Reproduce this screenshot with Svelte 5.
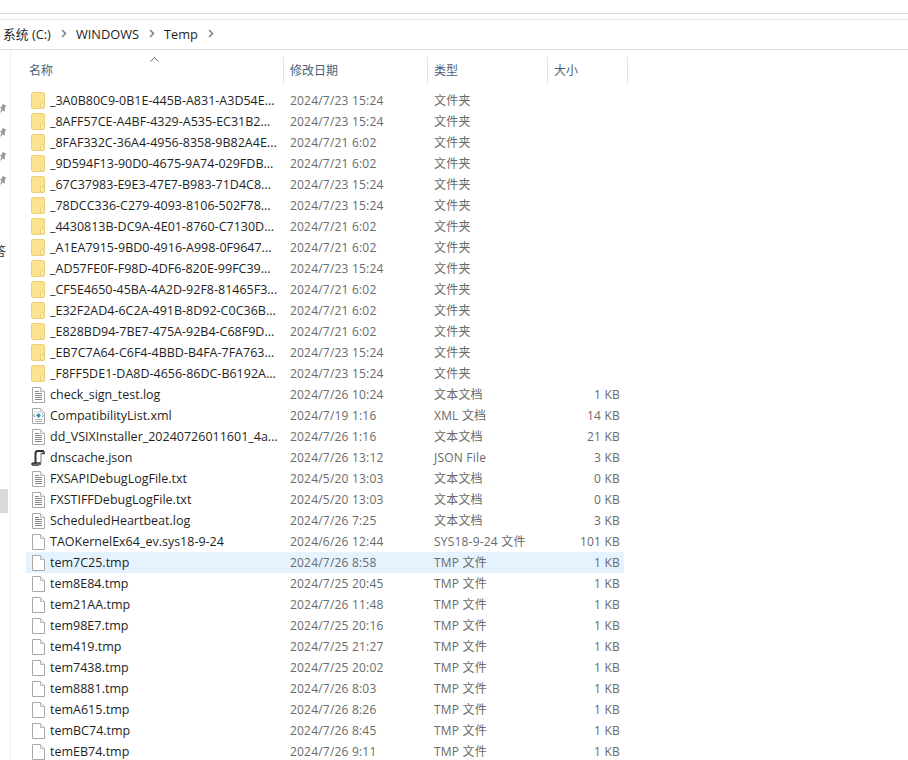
<script>
	const folders = [
		['_3A0B80C9-0B1E-445B-A831-A3D54E...', '2024/7/23 15:24'],
		['_8AFF57CE-A4BF-4329-A535-EC31B2...', '2024/7/23 15:24'],
		['_8FAF332C-36A4-4956-8358-9B82A4E...', '2024/7/21 6:02'],
		['_9D594F13-90D0-4675-9A74-029FDB...', '2024/7/21 6:02'],
		['_67C37983-E9E3-47E7-B983-71D4C8...', '2024/7/23 15:24'],
		['_78DCC336-C279-4093-8106-502F78...', '2024/7/23 15:24'],
		['_4430813B-DC9A-4E01-8760-C7130D...', '2024/7/21 6:02'],
		['_A1EA7915-9BD0-4916-A998-0F9647...', '2024/7/21 6:02'],
		['_AD57FE0F-F98D-4DF6-820E-99FC39...', '2024/7/23 15:24'],
		['_CF5E4650-45BA-4A2D-92F8-81465F3...', '2024/7/21 6:02'],
		['_E32F2AD4-6C2A-491B-8D92-C0C36B...', '2024/7/21 6:02'],
		['_E828BD94-7BE7-475A-92B4-C68F9D...', '2024/7/21 6:02'],
		['_EB7C7A64-C6F4-4BBD-B4FA-7FA763...', '2024/7/23 15:24'],
		['_F8FF5DE1-DA8D-4656-86DC-B6192A...', '2024/7/23 15:24']
	];

	const rows = [
		...folders.map(([name, date]) => ({ icon: 'folder', name, date, type: '文件夹', size: '' })),
		{ icon: 'text', name: 'check_sign_test.log', date: '2024/7/26 10:24', type: '文本文档', size: '1 KB' },
		{ icon: 'xml', name: 'CompatibilityList.xml', date: '2024/7/19 1:16', type: 'XML 文档', size: '14 KB' },
		{ icon: 'text', name: 'dd_VSIXInstaller_20240726011601_4a...', date: '2024/7/26 1:16', type: '文本文档', size: '21 KB' },
		{ icon: 'json', name: 'dnscache.json', date: '2024/7/26 13:12', type: 'JSON File', size: '3 KB' },
		{ icon: 'text', name: 'FXSAPIDebugLogFile.txt', date: '2024/5/20 13:03', type: '文本文档', size: '0 KB' },
		{ icon: 'text', name: 'FXSTIFFDebugLogFile.txt', date: '2024/5/20 13:03', type: '文本文档', size: '0 KB' },
		{ icon: 'text', name: 'ScheduledHeartbeat.log', date: '2024/7/26 7:25', type: '文本文档', size: '3 KB' },
		{ icon: 'blank', name: 'TAOKernelEx64_ev.sys18-9-24', date: '2024/6/26 12:44', type: 'SYS18-9-24 文件', size: '101 KB' },
		{ icon: 'blank', name: 'tem7C25.tmp', date: '2024/7/26 8:58', type: 'TMP 文件', size: '1 KB', hover: true },
		{ icon: 'blank', name: 'tem8E84.tmp', date: '2024/7/25 20:45', type: 'TMP 文件', size: '1 KB' },
		{ icon: 'blank', name: 'tem21AA.tmp', date: '2024/7/26 11:48', type: 'TMP 文件', size: '1 KB' },
		{ icon: 'blank', name: 'tem98E7.tmp', date: '2024/7/25 20:16', type: 'TMP 文件', size: '1 KB' },
		{ icon: 'blank', name: 'tem419.tmp', date: '2024/7/25 21:27', type: 'TMP 文件', size: '1 KB' },
		{ icon: 'blank', name: 'tem7438.tmp', date: '2024/7/25 20:02', type: 'TMP 文件', size: '1 KB' },
		{ icon: 'blank', name: 'tem8881.tmp', date: '2024/7/26 8:03', type: 'TMP 文件', size: '1 KB' },
		{ icon: 'blank', name: 'temA615.tmp', date: '2024/7/26 8:26', type: 'TMP 文件', size: '1 KB' },
		{ icon: 'blank', name: 'temBC74.tmp', date: '2024/7/26 8:45', type: 'TMP 文件', size: '1 KB' },
		{ icon: 'blank', name: 'temEB74.tmp', date: '2024/7/26 9:11', type: 'TMP 文件', size: '1 KB' }
	];
</script>

{#snippet chevron()}
	<svg class="chev" width="6" height="9" viewBox="0 0 6 9"><path d="M1 1l3.500 3.500L1 8" fill="none" stroke="#808080" stroke-width="1.500" /></svg>
{/snippet}

{#snippet pin()}
	<svg class="pin" width="6" height="9" viewBox="0 0 6 9"><path d="M6 1.500L3 0 1 3 0 3.500l1.500 1.500L0 9l3-2.500L4.500 8 5 4z" fill="#9a9a9a" /></svg>
{/snippet}

{#snippet fileIcon(kind)}
	{#if kind === 'folder'}
		<svg width="14" height="17" viewBox="0 0 14 17">
			<rect x=".5" y=".5" width="13" height="16" rx="1.500" fill="#fde28f" stroke="#ecd07a" />
			<path d="M9.500 16v-4.500l3.500-2V15c0 .6-.4 1-1 1z" fill="#fcedb8" stroke="#ecd07a" />
		</svg>
	{:else if kind === 'json'}
		<svg width="14" height="16" viewBox="0 0 14 16">
			<path d="M4.500 14V3.500C4.500 2 5.300 1 6.800 1H13" fill="none" stroke="#333" stroke-width="2" />
			<path d="M13 1.500v2h-2.500M.8 14.800c0-1.200.8-1.800 1.700-1.800h6.500v2" fill="none" stroke="#333" stroke-width="1.600" />
			<path d="M1 15h7" stroke="#333" stroke-width="1.500" />
			<path d="M10 2.500V13" stroke="#777" />
		</svg>
	{:else}
		<svg width="13" height="16" viewBox="0 0 13 16">
			<path d="M.5.500h8l4 4v11H.5z" fill="#fff" stroke="#a8a8a8" />
			<path d="M8.500.500v4h4" fill="#f2f2f2" stroke="#b8b8b8" />
			{#if kind === 'text'}
				<path d="M3 4.500h4M3 6.500h7M3 8.500h7M3 10.500h7M3 12.500h7" stroke="#858585" />
			{:else if kind === 'xml'}
				<rect x="1.500" y="3" width="10" height="1.500" fill="#dfe8ef" />
				<path d="M3 11.500h7M3 13.500h7" stroke="#b0b0b0" />
				<path d="M6.500 5l2.500 2.500L6.500 10 4 7.500z" fill="#2f9aa8" />
				<path d="M3 6l-1.500 1.500L3 9M10 6l1.500 1.500L10 9" fill="none" stroke="#5a8fc5" />
			{/if}
		</svg>
	{/if}
{/snippet}

<div class="window">
	<div class="ribbon-gap"></div>
	<div class="crumbs">
		<span>系统 (C:)</span>{@render chevron()}
		<span>WINDOWS</span>{@render chevron()}
		<span>Temp</span>{@render chevron()}
	</div>
	<div class="body">
		<aside class="nav">
			<div class="pins">
				{@render pin()}
				{@render pin()}
				{@render pin()}
				{@render pin()}
			</div>
			<div class="cut-label">答</div>
			<div class="nav-selected"></div>
		</aside>
		<main class="list">
			<div class="head">
				<div class="col name-col">
					名称
					<svg class="sort" width="9" height="5" viewBox="0 0 9 5"><path d="M.5 4.500l4-4 4 4" fill="none" stroke="#6e6e6e" /></svg>
				</div>
				<div class="col">修改日期</div>
				<div class="col">类型</div>
				<div class="col">大小</div>
			</div>
			{#each rows as row}
				<div class="row" class:hover={row.hover}>
					<div class="cell-name">
						<span class="icon">{@render fileIcon(row.icon)}</span>
						<span class="fname">{row.name}</span>
					</div>
					<div class="meta">{row.date}</div>
					<div class="meta">{row.type}</div>
					<div class="meta size">{row.size}</div>
				</div>
			{/each}
		</main>
	</div>
</div>

<style>
	:global(body) {
		background: #fff;
		overflow: hidden;
	}
	.window {
		height: 760px;
		overflow: hidden;
		font-family: "Open Sans", "Noto Sans CJK SC", sans-serif;
		font-size: 12px;
		color: #1f1f1f;
		background: #fff;
	}
	.ribbon-gap {
		height: 5px;
		margin-top: 13px;
		border-top: 1px solid #dcdcdc;
		border-bottom: 1px solid #e3e3e3;
	}
	.crumbs {
		display: flex;
		align-items: center;
		height: 27px;
		padding: 0 0 2px 3px;
		border-bottom: 1px solid #dfdfdf;
		font-size: 12.8px;
	}
	.chev {
		margin: 0 9px 0 10px;
	}
	.body {
		display: flex;
		height: 710px;
	}
	.nav {
		width: 10px;
		flex: none;
		border-right: 1px solid #f0f0f0;
		overflow: hidden;
	}
	.pins {
		display: flex;
		flex-direction: column;
		gap: 15px;
		padding-top: 54px;
	}
	.pin {
		display: block;
	}
	.cut-label {
		margin: 59px 0 0 -6px;
		line-height: 16px;
		color: #333;
	}
	.nav-selected {
		width: 8px;
		height: 24px;
		margin-top: 229px;
		background: #d9d9d9;
	}
	.list {
		flex: 1;
		padding-left: 15px;
	}
	.head {
		display: grid;
		grid-template-columns: 258px 144px 120px 80px;
		height: 40px;
		padding-top: 7px;
		box-sizing: border-box;
	}
	.col {
		position: relative;
		height: 27px;
		padding-left: 6px;
		line-height: 27px;
		color: #4c607a;
		border-right: 1px solid #e5e5e5;
	}
	.col:first-child {
		padding-left: 3px;
	}
	.sort {
		position: absolute;
		left: 124px;
		top: 0;
	}
	.row {
		display: grid;
		grid-template-columns: 257px 144px 120px 73px;
		height: 21px;
		line-height: 21px;
		width: 598px;
	}
	.row.hover {
		background: #e5f3ff;
	}
	.cell-name {
		display: flex;
		align-items: center;
		min-width: 0;
		white-space: nowrap;
	}
	.icon {
		display: flex;
		justify-content: center;
		width: 16px;
		margin-left: 4px;
		flex: none;
	}
	.fname {
		margin-left: 4px;
		font-size: 12.5px;
		color: #1f1f1f;
	}
	.meta {
		padding-left: 7px;
		letter-spacing: .2px;
		color: #6a6a6a;
		white-space: nowrap;
	}
	.size {
		padding-left: 0;
		text-align: right;
	}
</style>
